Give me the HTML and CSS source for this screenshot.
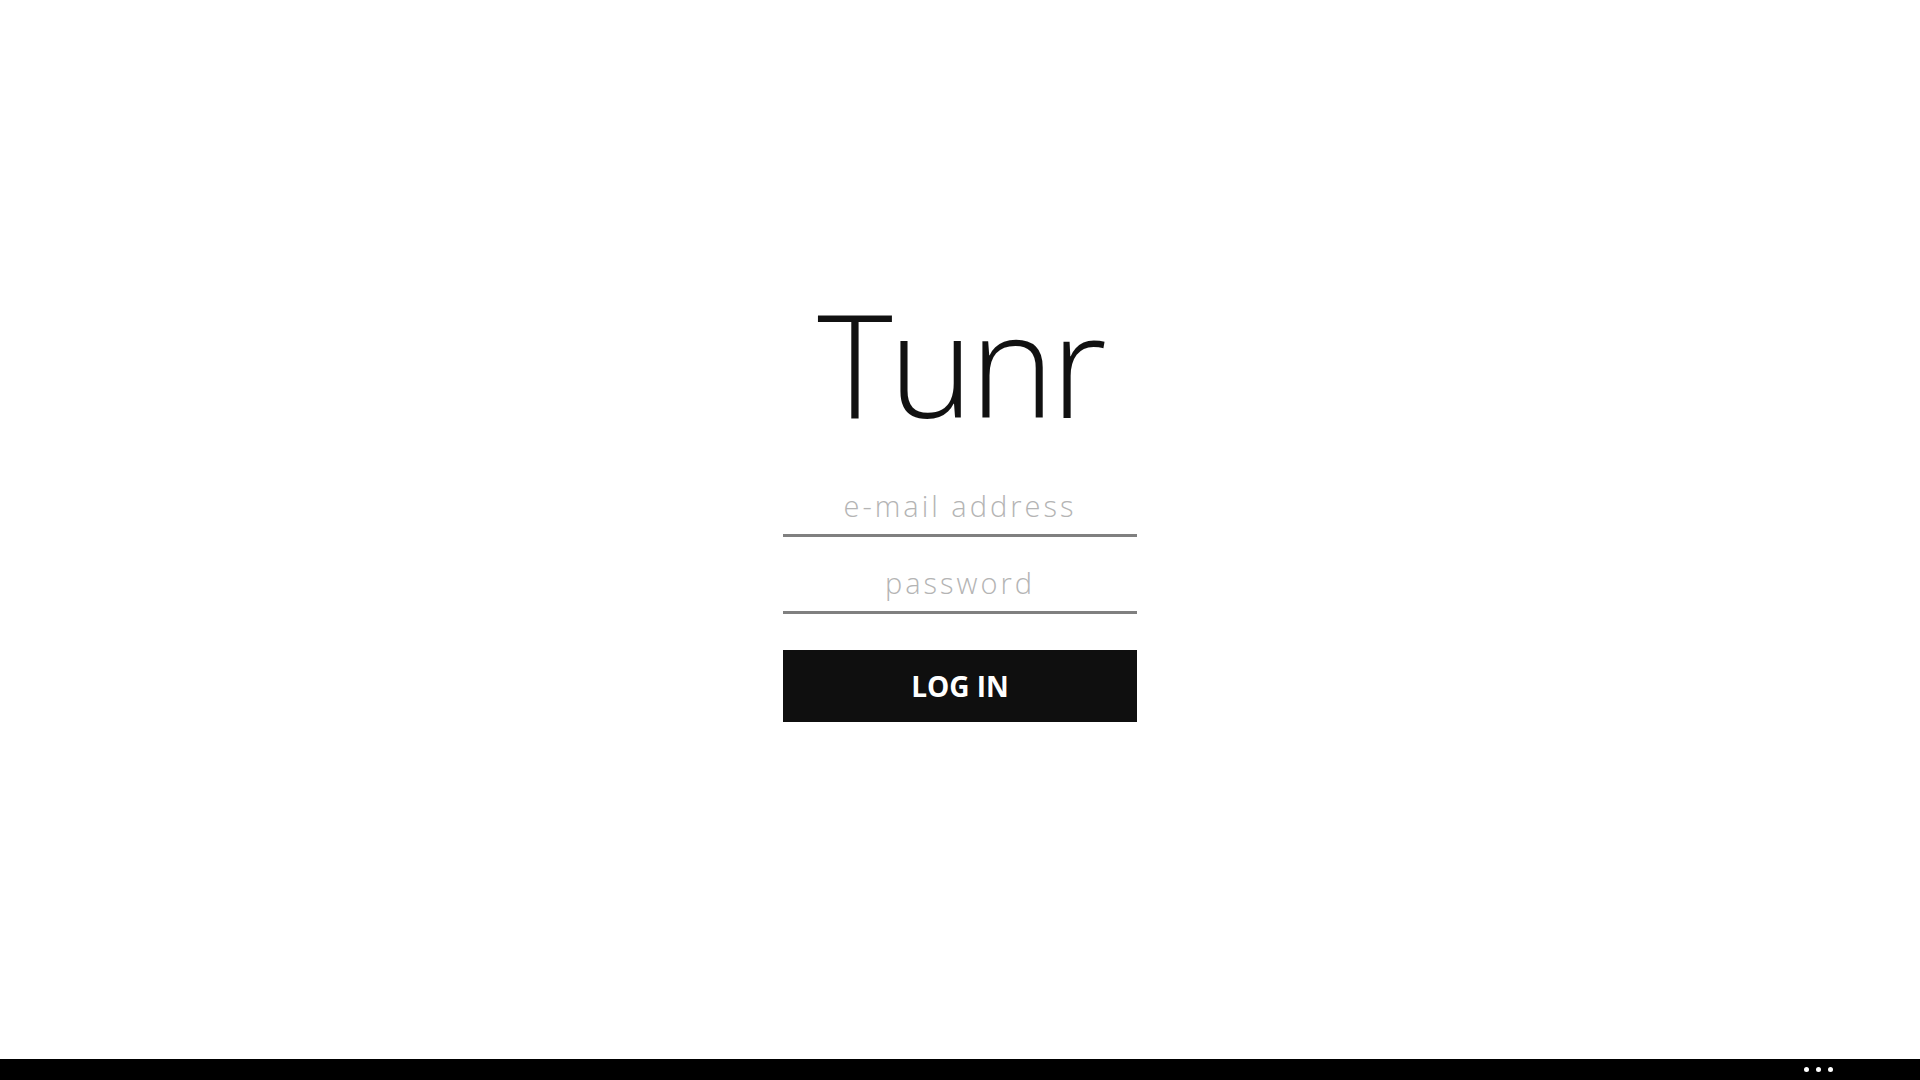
FILE: index.html
```html
<!DOCTYPE html>
<html lang="en">
<head>
<meta charset="utf-8">
<title>Tunr</title>
<link rel="stylesheet" href="styles.css">
</head>
<body>
<main class="stage">
  <form class="login">
    <h1 class="brand">Tunr</h1>
    <input class="field" type="email" placeholder="e-mail address">
    <input class="field" type="password" placeholder="password">
    <button class="submit" type="button">LOG IN</button>
  </form>
</main>
<footer class="appbar">
  <span class="dots"><i></i><i></i><i></i></span>
</footer>
</body>
</html>
```
FILE: styles.css
```css
* { box-sizing: border-box; }
html, body { margin: 0; height: 100%; }
body {
  background: #fff;
  font-family: "Open Sans", "Liberation Sans", sans-serif;
  display: flex;
  flex-direction: column;
  overflow: hidden;
}
.stage {
  flex: 1;
  display: flex;
  justify-content: center;
  align-items: flex-start;
  padding-top: 264px;
}
.login {
  width: 354px;
  display: flex;
  flex-direction: column;
  align-items: stretch;
}
.brand {
  margin: 0;
  font-weight: 300;
  font-size: 144px;
  line-height: 196px;
  color: #111;
  text-align: center;
  letter-spacing: -4px;
}
.field {
  border: 0;
  border-bottom: 3px solid #808080;
  outline: none;
  background: transparent;
  font-family: inherit;
  font-weight: 300;
  font-size: 29px;
  line-height: 38px;
  letter-spacing: 3px;
  text-align: center;
  color: #333;
  height: 77px;
  padding: 26px 0 10px;
  margin: 0;
}
.field::placeholder { color: #b4b4b4; opacity: 1; }
.submit {
  margin-top: 36px;
  height: 72px;
  border: 0;
  background: #0f0f0f;
  color: #fff;
  font-family: inherit;
  font-weight: 700;
  font-size: 28px;
  padding: 0;
}
.appbar {
  height: 21px;
  background: #000;
  display: flex;
  justify-content: flex-end;
  align-items: center;
  padding-right: 87px;
}
.dots { display: flex; gap: 7px; }
.dots i {
  display: block;
  width: 5px;
  height: 5px;
  border-radius: 50%;
  background: #fff;
}
```
